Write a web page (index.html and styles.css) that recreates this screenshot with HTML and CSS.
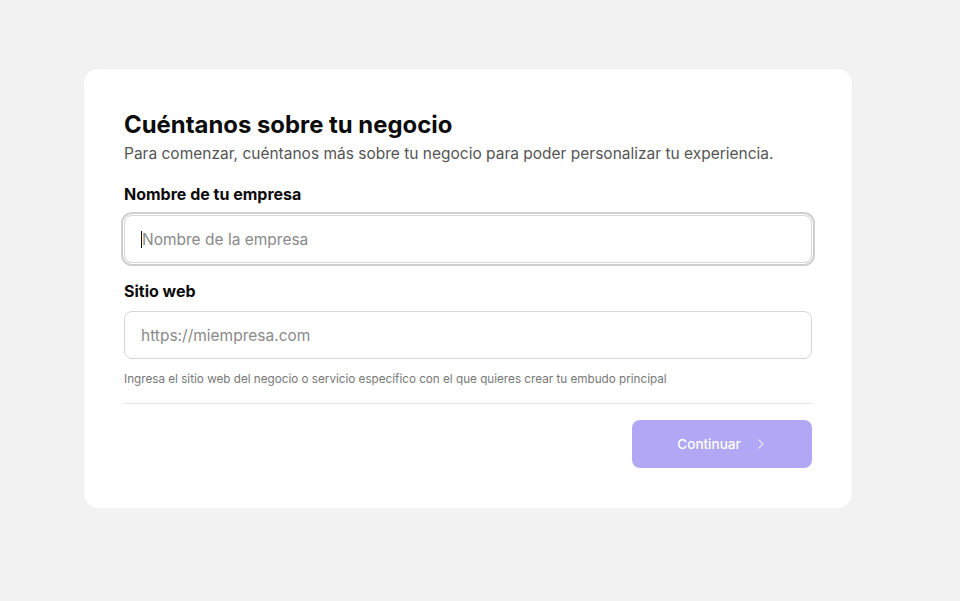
FILE: index.html
```html
<!DOCTYPE html>
<html>
<head>
  <meta charset="utf-8">
  <title>Cuéntanos sobre tu negocio</title>
  <link rel="stylesheet" href="styles.css">
</head>
<body>
  <div class="page">
    <div class="card">
      <h1 class="title">Cuéntanos sobre tu negocio</h1>
      <p class="subtitle">Para comenzar, cuéntanos más sobre tu negocio para poder personalizar tu experiencia.</p>
      <!-- Company name -->
      <div class="field">
        <label class="label" for="company">Nombre de tu empresa</label>
        <div class="input input-focus">
          <span class="caret"></span><span class="placeholder">Nombre de la empresa</span>
        </div>
      </div>
      <!-- Website -->
      <div class="field field-web">
        <label class="label" for="website">Sitio web</label>
        <div class="input">
          <span class="placeholder">https://miempresa.com</span>
        </div>
        <p class="hint">Ingresa el sitio web del negocio o servicio específico con el que quieres crear tu embudo principal</p>
      </div>
      <div class="footer">
        <button class="button">Continuar
          <svg width="12" height="12" viewBox="0 0 12 12"><path d="M4 2l4 4-4 4" fill="none" stroke="currentColor" stroke-width="1.2" stroke-linecap="round" stroke-linejoin="round"/></svg>
        </button>
      </div>
    </div>
  </div>
</body>
</html>
```

FILE: styles.css
```css
/*Page*/
body {
  margin: 0;
  background-color: #f2f2f2;
  font-family: "Inter", "Noto Sans", sans-serif;
  color: #111;
}
.page {
  padding: 69px 108px 0 84px;
}
/*Card*/
.card {
  width: 688px;
  background-color: #fff;
  border-radius: 14px;
  padding: 40px;
  box-shadow: 0 0 0 1px #eeeeee;
}
.title {
  margin: 0;
  font-size: 23.9px;
  font-weight: 700;
  line-height: 32px;
  color: #0c0c0c;
}
.subtitle {
  margin: 2px 0 0;
  font-size: 15.5px;
  line-height: 22px;
  color: #555;
}
/*Fields*/
.field {
  margin-top: 18px;
}
.field-web {
  margin-top: 17px;
}
.label {
  display: block;
  font-size: 16px;
  font-weight: 700;
  line-height: 22px;
  margin-bottom: 10px;
  color: #0c0c0c;
}
.field-web .label {
  margin-bottom: 9px;
}
.input {
  height: 46px;
  border: 1px solid #d6d6d6;
  border-radius: 8px;
  display: flex;
  align-items: center;
  padding: 0 16px;
  font-size: 15.5px;
}
.input-focus {
  box-shadow: 0 0 0 1px #fff, 0 0 0 3px #cfcfcf;
}
.caret {
  width: 1px;
  height: 17px;
  background-color: #111;
}
.placeholder {
  color: #8a8a8a;
}
.hint {
  margin: 12px 0 0;
  font-size: 11.7px;
  line-height: 16px;
  color: #777;
}
/*Footer*/
.footer {
  margin-top: 16px;
  border-top: 1px solid #e6e6e6;
  padding-top: 16px;
  display: flex;
  justify-content: flex-end;
}
.button {
  width: 180px;
  height: 48px;
  border: none;
  border-radius: 8px;
  background-color: #b1a8f5;
  color: #fff;
  font-family: "Inter", sans-serif;
  font-size: 13.5px;
  font-weight: 500;
  display: flex;
  align-items: center;
  justify-content: center;
  gap: 14px;
}
.button svg {
  color: #e4e0fc;
}
```
